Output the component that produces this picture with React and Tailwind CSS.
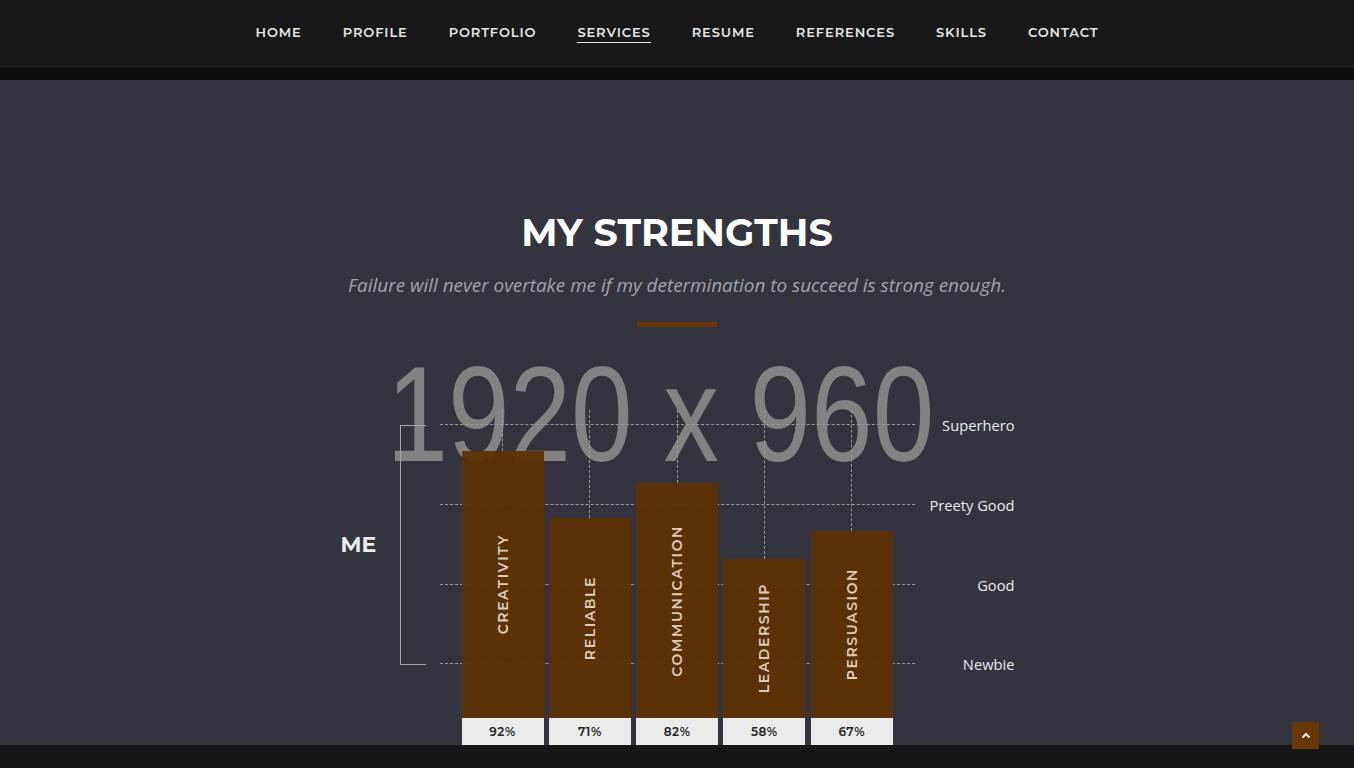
import React from "react";

const navItems = ["Home", "Profile", "Portfolio", "Services", "Resume", "References", "Skills", "Contact"];

const skills = [
  { name: "Creativity", pct: "92%", h: "h-[267px]" },
  { name: "Reliable", pct: "71%", h: "h-[200px]" },
  { name: "Communication", pct: "82%", h: "h-[235px]" },
  { name: "Leadership", pct: "58%", h: "h-[159px]" },
  { name: "Persuasion", pct: "67%", h: "h-[187px]" },
];

const levels = [
  { label: "Superhero", top: "top-[64px]" },
  { label: "Preety Good", top: "top-[144px]" },
  { label: "Good", top: "top-[224px]" },
  { label: "Newbie", top: "top-[303px]" },
];

const montserrat = "font-['Montserrat','Noto_Sans',sans-serif]";

function Nav() {
  return (
    <div>
      <nav className="h-[67px] bg-[#181818] border-b border-[#262626] flex justify-center items-center gap-[41px]">
        {navItems.map((item) => (
          <a
            key={item}
            href="#"
            className={`${montserrat} text-[13px] font-semibold uppercase tracking-[0.9px] text-[#e6e6e6] leading-[16px] ${
              item === "Services" ? "border-b border-[#e6e6e6] pb-[2px] mt-[1px]" : "mb-[3px]"
            }`}
          >
            {item}
          </a>
        ))}
      </nav>
      <div className="h-[13px] bg-[#0e0e0e]" />
    </div>
  );
}

function Chart() {
  return (
    <div className="relative w-[680px] h-[385px] mt-[34px] ml-[1px]">
      {/* placeholder image text */}
      <div className="absolute left-[-2px] top-[-21px] w-[560px] text-center font-['Liberation_Sans',Arial,sans-serif] text-[135px] leading-[150px] text-[#828282] scale-x-[0.82] whitespace-nowrap select-none">
        1920 x 960
      </div>

      {/* ME + bracket */}
      <div className={`absolute left-[3px] top-[169px] ${montserrat} font-bold text-[22px] leading-[30px] text-[#ececec]`}>
        ME
      </div>
      <div className="absolute left-[62px] top-[64px] w-[26px] h-[240px] border-l border-t border-b border-[#a8a8a8]" />

      {/* grid lines + labels */}
      {levels.map((l) => (
        <div key={l.label} className={`absolute left-[102px] right-[3px] ${l.top} flex items-center h-0`}>
          <div className="w-[475px] border-t border-dashed border-[#9a9a9a]" />
          <div className="flex-1 text-right font-['Open_Sans',sans-serif] text-[14.7px] text-[#ebebeb] leading-[20px]">
            {l.label}
          </div>
        </div>
      ))}

      {/* bars */}
      <div className="absolute left-[124px] bottom-0 flex items-end gap-[5.3px]">
        {skills.map((s) => (
          <div key={s.name} className="w-[82px] h-[335px] flex flex-col items-center">
            <div className="flex-1 border-l border-dashed border-[#9a9a9a]" />
            <div className={`w-full ${s.h} bg-[#5e3204]/95 flex items-center justify-center`}>
              <span
                className={`${montserrat} text-[14px] font-semibold uppercase tracking-[1.6px] text-[#dccbbb] [writing-mode:vertical-rl] rotate-180 leading-[16px]`}
              >
                {s.name}
              </span>
            </div>
            <div className={`w-full h-[27px] bg-[#ebebeb] flex items-center justify-center ${montserrat} text-[12px] font-semibold tracking-[0.5px] text-[#222]`}>
              {s.pct}
            </div>
          </div>
        ))}
      </div>
    </div>
  );
}

export default function App() {
  return (
    <div className="min-h-[768px] bg-[#161616]">
      <Nav />
      <section className="h-[665px] bg-[#33343d] flex flex-col items-center pt-[129px] overflow-hidden">
        <h2 className={`${montserrat} font-bold text-[38px] leading-[48px] tracking-[0px] text-white uppercase`}>
          My Strengths
        </h2>
        <p className="mt-[16px] font-['Open_Sans',sans-serif] italic text-[18.9px] leading-[25px] text-[#a3a3a8]">
          Failure will never overtake me if my determination to succeed is strong enough.
        </p>
        <div className="mt-[24px] w-[80px] h-[5px] bg-[#6a3808]" />
        <Chart />
      </section>
      <div className="h-[23px] bg-[#161616]" />
      <button className="fixed right-[35px] bottom-[19px] w-[27px] h-[27px] bg-[#6a3808] flex items-center justify-center">
        <svg width="10" height="7" viewBox="0 0 10 7" fill="none">
          <path d="M1.5 5.5 L5 2 L8.5 5.5" stroke="#fff" strokeWidth="1.8" />
        </svg>
      </button>
    </div>
  );
}
